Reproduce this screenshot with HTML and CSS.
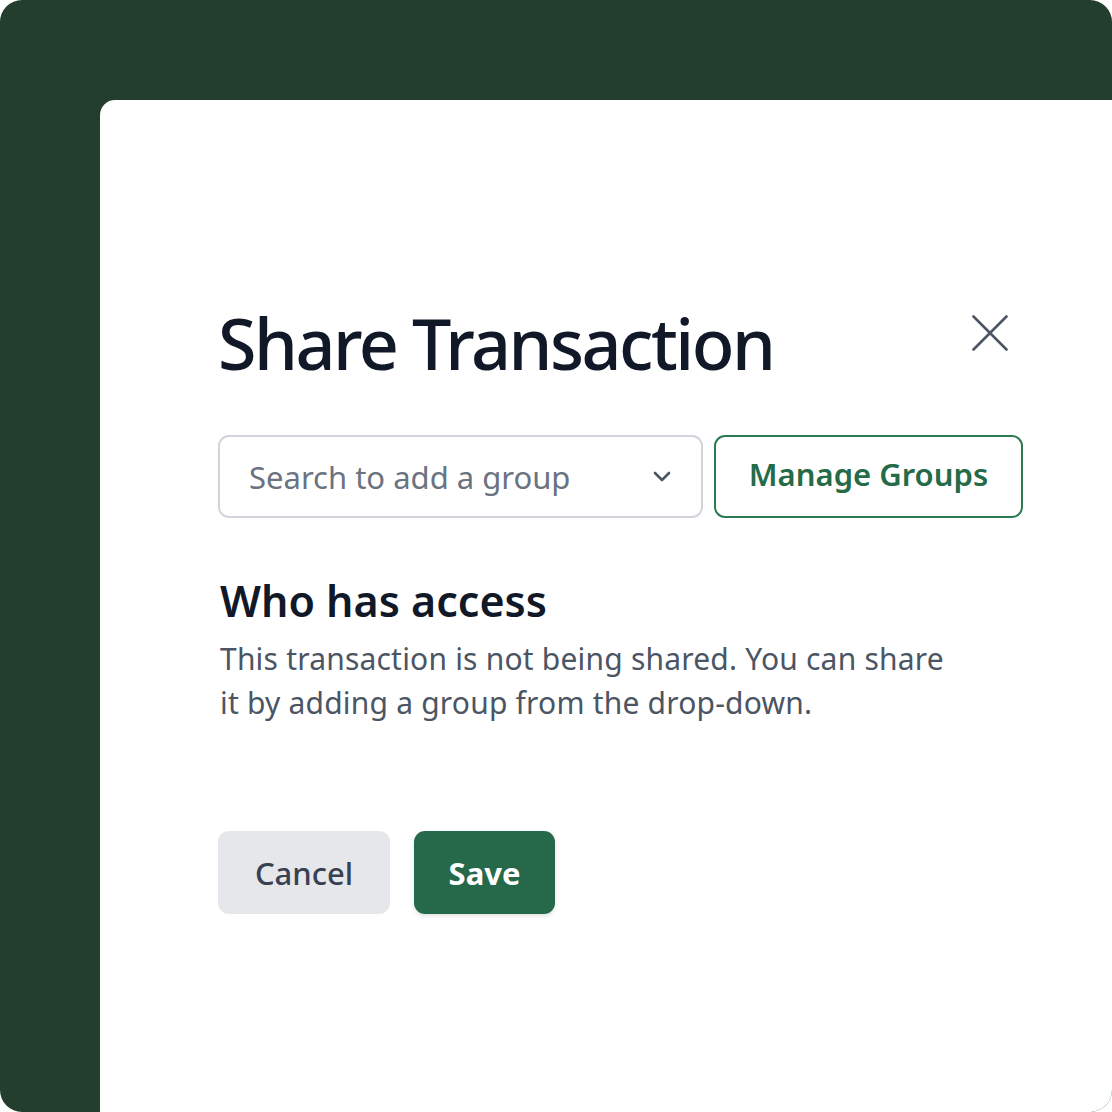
FILE: index.html
```html
<!DOCTYPE html>
<html lang="en">
<head>
<meta charset="utf-8">
<title>Share Transaction</title>
<link rel="stylesheet" href="styles.css">
</head>
<body>
<div class="frame">
  <div class="card">
    <div class="header">
      <h1 class="title">Share Transaction</h1>
      <button class="close" aria-label="Close">
        <svg width="36" height="36" viewBox="0 0 36 36" fill="none" stroke="#4b5563" stroke-width="2.6" stroke-linecap="round">
          <path d="M1.5 1.5 L34.5 34.5 M34.5 1.5 L1.5 34.5"/>
        </svg>
      </button>
    </div>
    <div class="picker-row">
      <div class="select">
        <span class="placeholder">Search to add a group</span>
        <svg class="chevron" width="18" height="11" viewBox="0 0 18 11" fill="none" stroke="#4b5563" stroke-width="2.6" stroke-linecap="round" stroke-linejoin="round">
          <path d="M2 2 L9 9 L16 2"/>
        </svg>
      </div>
      <button class="btn-outline">Manage Groups</button>
    </div>
    <h2 class="subtitle">Who has access</h2>
    <p class="desc">This transaction is not being shared. You can share<br>it by adding a group from the drop-down.</p>
    <div class="actions">
      <button class="btn-cancel">Cancel</button>
      <button class="btn-save">Save</button>
    </div>
  </div>
</div>
</body>
</html>
```
FILE: styles.css
```css
* { box-sizing: border-box; }
html, body { margin: 0; padding: 0; background: #ffffff; }
body { font-family: "Noto Sans", "Open Sans", sans-serif; }
.frame {
  width: 1112px;
  height: 1112px;
  background: #233e2f;
  border-radius: 22px;
  overflow: hidden;
  padding: 100px 0 0 100px;
  display: flex;
}
.card {
  flex: 1;
  background: #ffffff;
  border-top-left-radius: 15px;
  padding: 207px 0 0 118px;
}
.header {
  width: 805px;
  display: flex;
  justify-content: space-between;
  align-items: flex-start;
}
.title {
  margin: 0;
  font-size: 70px;
  line-height: 72px;
  font-weight: 500;
  color: #111827;
  letter-spacing: -2.5px;
}
.close {
  border: 0;
  background: none;
  padding: 0;
  margin: 8px 15px 0 0;
  width: 36px;
  height: 36px;
  display: flex;
}
.picker-row {
  margin-top: 56px;
  width: 805px;
  display: flex;
  gap: 11px;
}
.select {
  width: 485px;
  height: 83px;
  border: 2px solid #d1d5db;
  border-radius: 11px;
  display: flex;
  align-items: center;
  justify-content: space-between;
  padding: 0 30px 0 29px;
}
.placeholder {
  font-size: 31px;
  color: #6b7280;
}
.btn-outline {
  flex: 1;
  height: 83px;
  border: 2px solid #2a7a52;
  border-radius: 11px;
  background: #ffffff;
  font-family: inherit;
  font-size: 31px;
  font-weight: 600;
  color: #256b47;
  padding: 0 0 5px;
}
.subtitle {
  margin: 57px 0 0 2px;
  font-size: 43px;
  line-height: 52px;
  font-weight: 600;
  color: #111827;
}
.desc {
  margin: 10px 0 0 2px;
  font-size: 30px;
  line-height: 44px;
  color: #4b5563;
  letter-spacing: 0.2px;
}
.actions {
  margin-top: 106px;
  display: flex;
  gap: 24px;
}
.btn-cancel, .btn-save {
  height: 83px;
  border: 0;
  border-radius: 11px;
  font-family: inherit;
  font-size: 31px;
  padding: 0;
}
.btn-cancel {
  width: 172px;
  background: #e5e7eb;
  color: #374151;
  font-weight: 500;
}
.btn-save {
  width: 141px;
  background: #25694a;
  color: #ffffff;
  font-weight: 700;
  box-shadow: 0 2px 4px rgba(0,0,0,0.12);
}
```
